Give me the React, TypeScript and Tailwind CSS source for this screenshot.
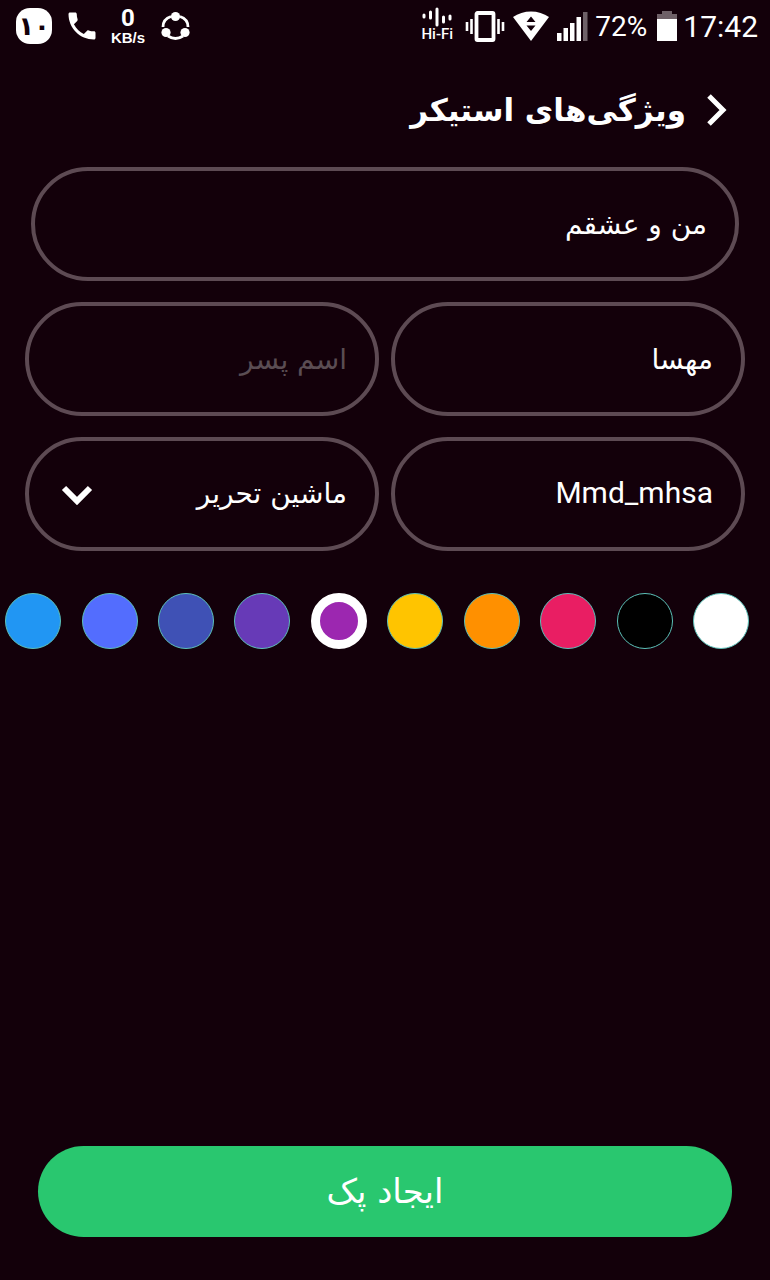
import { useState } from 'react';

const swatches = [
    { name: 'سفید', bg: 'bg-white' },
    { name: 'سیاه', bg: 'bg-black' },
    { name: 'صورتی', bg: 'bg-[#e91e63]' },
    { name: 'نارنجی', bg: 'bg-[#ff9000]' },
    { name: 'زرد', bg: 'bg-[#ffc400]' },
    { name: 'ارغوانی', bg: 'bg-[#9c27b0]' },
    { name: 'بنفش', bg: 'bg-[#673ab7]' },
    { name: 'نیلی', bg: 'bg-[#3f51b5]' },
    { name: 'آبی', bg: 'bg-[#536dfe]' },
    { name: 'آبی روشن', bg: 'bg-[#2196f3]' },
];

const fonts = ['ماشین تحریر', 'نستعلیق', 'شکسته'];

const fieldClass =
    'block h-[114px] w-full min-w-0 appearance-none rounded-full border-4 border-[#5d4a53] bg-transparent px-7 text-white outline-none placeholder:text-[#5a4d53] placeholder:opacity-100';

function StatusBar() {
    return (
        <div dir="ltr" className="flex h-[52px] items-center justify-between pl-4 pr-3 font-['Roboto',sans-serif] text-white">
            <div className="flex items-center">
                <span dir="rtl" className="flex h-9 w-9 items-center justify-center rounded-[14px] bg-white font-['DejaVu_Sans',sans-serif] text-[26px] font-bold leading-8 text-[#13000a]">
                    ۱۰
                </span>
                <svg className="ml-3 h-9 w-9" viewBox="0 0 24 24" fill="currentColor" aria-hidden="true">
                    <path d="M6.62 10.79c1.44 2.83 3.76 5.14 6.59 6.59l2.2-2.2c.27-.27.67-.36 1.02-.24 1.12.37 2.33.57 3.57.57.55 0 1 .45 1 1V20c0 .55-.45 1-1 1-9.39 0-17-7.61-17-17 0-.55.45-1 1-1h3.5c.55 0 1 .45 1 1 0 1.25.2 2.45.57 3.57.11.35.03.74-.25 1.02l-2.2 2.2z" />
                </svg>
                <div className="ml-2 flex w-10 flex-col items-center font-bold">
                    <span className="text-2xl leading-6">0</span>
                    <span className="font-['Liberation_Sans',sans-serif] text-[15px] leading-4">KB/s</span>
                </div>
                <svg className="ml-3 h-8 w-8" viewBox="0 0 32 32" aria-hidden="true">
                    <path d="M3 17Q3 9 11 6.500M20 6.500Q28 9 28 17M8 26Q15.500 31 23 26" fill="none" stroke="currentColor" strokeWidth="2.8" />
                    <circle cx="15.5" cy="6.5" r="4.6" fill="currentColor" />
                    <circle cx="6" cy="22.5" r="4.6" fill="currentColor" />
                    <circle cx="25" cy="22.5" r="4.6" fill="currentColor" />
                </svg>
            </div>
            <div className="flex items-center">
                <div className="flex w-8 flex-col items-center pb-1">
                    <svg className="h-5 w-8" viewBox="0 0 32 20" fill="none" stroke="currentColor" strokeWidth="3" strokeLinecap="round" aria-hidden="true">
                        <path d="M3 8v2M9.5 5v6M16 2v16M22.5 10v5M29 9v3" />
                    </svg>
                    <span className="text-[15px] font-medium leading-[14px]">Hi-Fi</span>
                </div>
                <svg className="ml-3 h-8 w-10" viewBox="0 0 40 32" fill="none" stroke="currentColor" aria-hidden="true">
                    <rect x="11.5" y="3" width="17" height="27" rx="1" strokeWidth="3.8" />
                    <path d="M6.5 9v15M2 12v9M33.5 9v15M38 12v9" strokeWidth="2.6" />
                </svg>
                <svg className="ml-2 h-8 w-9" viewBox="0 0 36 32" aria-hidden="true">
                    <path d="M0 7C10-.5 26-.5 36 7L18 31z" fill="currentColor" />
                    <path d="M18 6.500l4.500 5.500h-9zM18 21l-4.500-5.500h9z" fill="#13000a" />
                </svg>
                <svg className="ml-2 h-8 w-8" viewBox="0 0 32 32" aria-hidden="true">
                    <path d="M0 23h4.500v8H0zM6.500 18h4.500v13H6.500zM13 13h4.500v18H13zM19.500 7h4.500v24h-4.500z" fill="currentColor" />
                    <path d="M26 2h4.500v29H26z" fill="#6e6067" />
                </svg>
                <span className="ml-1.5 pt-0.5 text-[28px] leading-8">72%</span>
                <svg className="ml-2 h-8 w-6" viewBox="0 0 24 32" aria-hidden="true">
                    <path d="M2 4h5V1h10v3h5v5H2z" fill="#6e6067" />
                    <path d="M2 9h20v22H2z" fill="currentColor" />
                </svg>
                <span className="ml-1 pt-0.5 text-[30px] leading-8">17:42</span>
            </div>
        </div>
    );
}

export default function App() {
    const [title, setTitle] = useState('من و عشقم');
    const [girlName, setGirlName] = useState('مهسا');
    const [boyName, setBoyName] = useState('');
    const [packId, setPackId] = useState('Mmd_mhsa');
    const [font, setFont] = useState(fonts[0]);
    const [color, setColor] = useState('ارغوانی');

    return (
        <div dir="rtl" className="flex min-h-screen flex-col bg-[#13000a] font-['DejaVu_Sans',sans-serif] text-[28px] text-white">
            <StatusBar />

            <header className="flex h-[115px] items-center gap-4 px-9">
                <button type="button" aria-label="بازگشت" className="h-9 w-8">
                    <svg className="h-9 w-8" viewBox="0 0 32 36" fill="none" stroke="currentColor" strokeWidth="5" aria-hidden="true">
                        <path d="M7 4l14 14L7 32" />
                    </svg>
                </button>
                <h1 className="text-[31px] font-bold leading-10">ویژگی‌های استیکر</h1>
            </header>

            <form className="flex flex-1 flex-col" onSubmit={(e) => e.preventDefault()}>
                <div className="flex flex-col gap-[21px] px-[25px]">
                    <div className="px-[6px]">
                        <input aria-label="عنوان" className={fieldClass} value={title} onChange={(e) => setTitle(e.target.value)} />
                    </div>
                    <div className="grid grid-cols-2 gap-3">
                        <input aria-label="اسم دختر" className={fieldClass} value={girlName} onChange={(e) => setGirlName(e.target.value)} />
                        <input aria-label="اسم پسر" placeholder="اسم پسر" className={fieldClass} value={boyName} onChange={(e) => setBoyName(e.target.value)} />
                    </div>
                    <div className="grid grid-cols-2 gap-3">
                        <input aria-label="شناسه" className={`${fieldClass} pb-1 font-['Roboto',sans-serif] text-[30px]`} value={packId} onChange={(e) => setPackId(e.target.value)} />
                        <div className="relative">
                            <select aria-label="فونت" className={fieldClass} value={font} onChange={(e) => setFont(e.target.value)}>
                                {fonts.map((f) => (
                                    <option key={f} className="bg-[#13000a]">{f}</option>
                                ))}
                            </select>
                            <svg className="pointer-events-none absolute left-9 top-12 h-5 w-8" viewBox="0 0 32 20" fill="none" stroke="currentColor" strokeWidth="6" aria-hidden="true">
                                <path d="M3 3l13 13L29 3" />
                            </svg>
                        </div>
                    </div>
                </div>

                <fieldset aria-label="رنگ" className="mt-[42px] flex justify-between pl-[5px] pr-[21px]">
                    {swatches.map((s) => (
                        <input
                            key={s.name}
                            type="radio"
                            name="color"
                            aria-label={s.name}
                            checked={color === s.name}
                            onChange={() => setColor(s.name)}
                            className={`h-14 w-14 appearance-none rounded-full border border-[#5cc0b8] checked:border-[9px] checked:border-white ${s.bg}`}
                        />
                    ))}
                </fieldset>

                <div className="mt-auto px-[38px] pb-[43px]">
                    <button type="submit" className="block h-[91px] w-full rounded-full bg-[#29c76f] text-[34px]">
                        ایجاد پک
                    </button>
                </div>
            </form>
        </div>
    );
}
